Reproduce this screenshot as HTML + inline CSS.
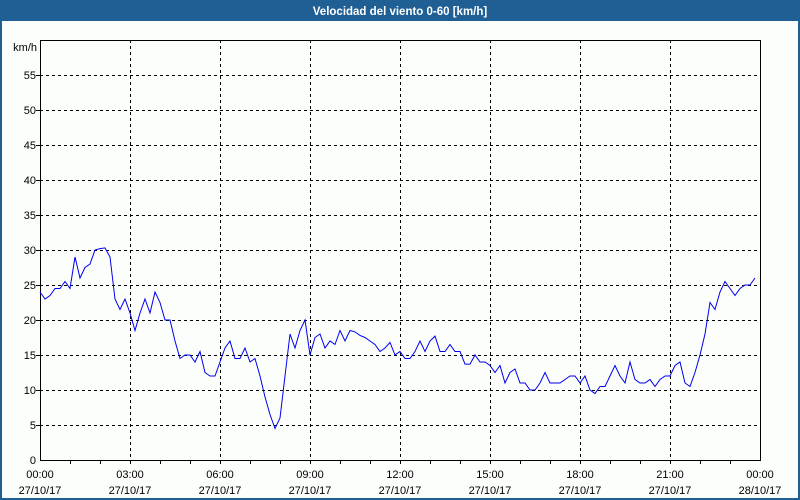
<!DOCTYPE html>
<html><head><meta charset="utf-8"><style>
body{margin:0;width:800px;height:500px;overflow:hidden;background:#1f5f94;font-family:"Liberation Sans",sans-serif}
</style></head><body>
<svg width="800" height="500" xmlns="http://www.w3.org/2000/svg" style="display:block">
<rect x="0" y="0" width="800" height="500" fill="#1f5f94"/>
<rect x="2" y="21" width="796" height="477" fill="#fcfefc"/>
<text x="400" y="15" fill="#fff" font-size="11.5" font-weight="bold" text-anchor="middle" font-family="Liberation Sans, sans-serif">Velocidad del viento 0-60 [km/h]</text>
<g stroke="#000" stroke-dasharray="3,3" stroke-width="1" shape-rendering="crispEdges">
<line x1="40" y1="425.5" x2="760" y2="425.5"/><line x1="40" y1="390.5" x2="760" y2="390.5"/><line x1="40" y1="355.5" x2="760" y2="355.5"/><line x1="40" y1="320.5" x2="760" y2="320.5"/><line x1="40" y1="285.5" x2="760" y2="285.5"/><line x1="40" y1="250.5" x2="760" y2="250.5"/><line x1="40" y1="215.5" x2="760" y2="215.5"/><line x1="40" y1="180.5" x2="760" y2="180.5"/><line x1="40" y1="145.5" x2="760" y2="145.5"/><line x1="40" y1="110.5" x2="760" y2="110.5"/><line x1="40" y1="75.5" x2="760" y2="75.5"/>
<line x1="130.5" y1="40" x2="130.5" y2="460"/><line x1="220.5" y1="40" x2="220.5" y2="460"/><line x1="310.5" y1="40" x2="310.5" y2="460"/><line x1="400.5" y1="40" x2="400.5" y2="460"/><line x1="490.5" y1="40" x2="490.5" y2="460"/><line x1="580.5" y1="40" x2="580.5" y2="460"/><line x1="670.5" y1="40" x2="670.5" y2="460"/>
</g>
<g stroke="#000" shape-rendering="crispEdges">
<path d="M70.5 460v4M100.5 460v4M130.5 460v4M160.5 460v4M190.5 460v4M220.5 460v4M250.5 460v4M280.5 460v4M310.5 460v4M340.5 460v4M370.5 460v4M400.5 460v4M430.5 460v4M460.5 460v4M490.5 460v4M520.5 460v4M550.5 460v4M580.5 460v4M610.5 460v4M640.5 460v4M670.5 460v4M700.5 460v4M730.5 460v4M36 425.5h4M36 390.5h4M36 355.5h4M36 320.5h4M36 285.5h4M36 250.5h4M36 215.5h4M36 180.5h4M36 145.5h4M36 110.5h4M36 75.5h4" fill="none"/>
<rect x="40.5" y="40.5" width="720" height="420" fill="none" stroke-width="1.3"/>
</g>
<g transform="translate(0,460) scale(1,-7)">
<polyline fill="none" stroke="#0000ee" stroke-width="1" vector-effect="non-scaling-stroke" points="40,24 45,23 50,23.5 55,24.5 60,24.5 65,25.5 70,24.5 75,29 80,26 85,27.5 90,28 95,30 100,30.2 105,30.3 110,29 115,23 120,21.5 125,23 130,21 135,18.5 140,21 145,23 150,21 155,24 160,22.5 165,20 170,20 175,17 180,14.5 185,15 190,15 195,14 200,15.5 205,12.5 210,12 215,12 220,14 225,16 230,17 235,14.5 240,14.5 245,16 250,14 255,14.5 260,12 265,9 270,6.5 275,4.5 280,6 285,12 290,18 295,16 300,18.5 305,20 310,15 315,17.5 320,18 325,16 330,17 335,16.5 340,18.5 345,17 350,18.5 355,18.3 360,17.8 365,17.5 370,17 375,16.5 380,15.5 385,16 390,16.8 395,15 400,15.5 405,14.5 410,14.5 415,15.5 420,17 425,15.5 430,17 435,17.7 440,15.5 445,15.5 450,16.5 455,15.5 460,15.5 465,13.7 470,13.7 475,15 480,14 485,14 490,13.5 495,12.5 500,13.5 505,11 510,12.5 515,13 520,11 525,11 530,10 535,10 540,11 545,12.5 550,11 555,11 560,11 565,11.5 570,12 575,12 580,11 585,12 590,10 595,9.5 600,10.5 605,10.5 610,12 615,13.5 620,12 625,11 630,14 635,11.5 640,11 645,11 650,11.5 655,10.5 660,11.5 665,12 670,12 675,13.5 680,14 685,11 690,10.5 695,12.5 700,15 705,18 710,22.5 715,21.5 720,24 725,25.5 730,24.5 735,23.5 740,24.5 745,25 750,25 755,26"/>
</g>
<g font-size="11" fill="#000" text-anchor="end" font-family="Liberation Sans, sans-serif">
<text x="36" y="464">0</text><text x="36" y="429">5</text><text x="36" y="394">10</text><text x="36" y="359">15</text><text x="36" y="324">20</text><text x="36" y="289">25</text><text x="36" y="254">30</text><text x="36" y="219">35</text><text x="36" y="184">40</text><text x="36" y="149">45</text><text x="36" y="114">50</text><text x="36" y="79">55</text><text x="37" y="51">km/h</text>
</g>
<g font-size="11" fill="#000" text-anchor="middle" font-family="Liberation Sans, sans-serif">
<text x="40" y="478">00:00</text><text x="40" y="494">27/10/17</text>
<text x="130" y="478">03:00</text><text x="130" y="494">27/10/17</text>
<text x="220" y="478">06:00</text><text x="220" y="494">27/10/17</text>
<text x="310" y="478">09:00</text><text x="310" y="494">27/10/17</text>
<text x="400" y="478">12:00</text><text x="400" y="494">27/10/17</text>
<text x="490" y="478">15:00</text><text x="490" y="494">27/10/17</text>
<text x="580" y="478">18:00</text><text x="580" y="494">27/10/17</text>
<text x="670" y="478">21:00</text><text x="670" y="494">27/10/17</text>
<text x="760" y="478">00:00</text><text x="760" y="494">28/10/17</text>
</g>
</svg>
</body></html>
